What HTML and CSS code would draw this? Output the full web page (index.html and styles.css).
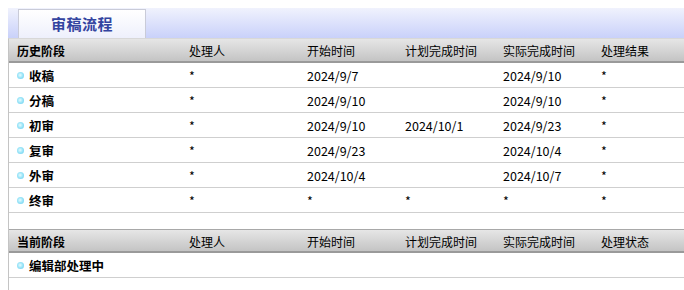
FILE: index.html
```html
<!DOCTYPE html>
<html>
<head>
<meta charset="utf-8">
<link rel="stylesheet" href="styles.css">
</head>
<body>
<div class="page">
  <div class="tabbar">
    <div class="tab">审稿流程</div>
  </div>
  <div class="table">
    <div class="row head">
      <div class="c first b">历史阶段</div>
      <div class="c">处理人</div>
      <div class="c">开始时间</div>
      <div class="c">计划完成时间</div>
      <div class="c">实际完成时间</div>
      <div class="c">处理结果</div>
    </div>
    <div class="row">
      <div class="c first b"><span class="dot"></span>收稿</div>
      <div class="c">*</div>
      <div class="c">2024/9/7</div>
      <div class="c"></div>
      <div class="c">2024/9/10</div>
      <div class="c">*</div>
    </div>
    <div class="row">
      <div class="c first b"><span class="dot"></span>分稿</div>
      <div class="c">*</div>
      <div class="c">2024/9/10</div>
      <div class="c"></div>
      <div class="c">2024/9/10</div>
      <div class="c">*</div>
    </div>
    <div class="row">
      <div class="c first b"><span class="dot"></span>初审</div>
      <div class="c">*</div>
      <div class="c">2024/9/10</div>
      <div class="c">2024/10/1</div>
      <div class="c">2024/9/23</div>
      <div class="c">*</div>
    </div>
    <div class="row">
      <div class="c first b"><span class="dot"></span>复审</div>
      <div class="c">*</div>
      <div class="c">2024/9/23</div>
      <div class="c"></div>
      <div class="c">2024/10/4</div>
      <div class="c">*</div>
    </div>
    <div class="row">
      <div class="c first b"><span class="dot"></span>外审</div>
      <div class="c">*</div>
      <div class="c">2024/10/4</div>
      <div class="c"></div>
      <div class="c">2024/10/7</div>
      <div class="c">*</div>
    </div>
    <div class="row">
      <div class="c first b"><span class="dot"></span>终审</div>
      <div class="c">*</div>
      <div class="c">*</div>
      <div class="c">*</div>
      <div class="c">*</div>
      <div class="c">*</div>
    </div>
    <div class="spacer"></div>
    <div class="row head">
      <div class="c first b">当前阶段</div>
      <div class="c">处理人</div>
      <div class="c">开始时间</div>
      <div class="c">计划完成时间</div>
      <div class="c">实际完成时间</div>
      <div class="c">处理状态</div>
    </div>
    <div class="row">
      <div class="c first b"><span class="dot"></span>编辑部处理中</div>
      <div class="c"></div>
      <div class="c"></div>
      <div class="c"></div>
      <div class="c"></div>
      <div class="c"></div>
    </div>
    <div class="tail"></div>
  </div>
</div>
</body>
</html>
```
FILE: styles.css
```css
html, body {
  margin: 0;
  padding: 0;
  background: #fff;
}
body {
  padding: 8px 0 0 8px;
  font-family: "Noto Sans CJK SC", "Noto Sans", sans-serif;
  font-size: 12px;
  color: #000;
  overflow: hidden;
}
.page {
  width: 676px;
}
.tabbar {
  height: 30px;
  background: linear-gradient(to bottom, #f0f2fd 0%, #c9d1fa 100%);
  display: flex;
  align-items: flex-end;
  padding-left: 10px;
}
.tab {
  width: 128px;
  height: 29px;
  box-sizing: border-box;
  border: 1px solid #c9cbd8;
  border-bottom: none;
  background: linear-gradient(to bottom, #ffffff 0%, #eef0fc 100%);
  color: #3344a0;
  font-weight: bold;
  font-size: 15px;
  display: flex;
  align-items: center;
  justify-content: center;
  letter-spacing: 0.5px;
  padding-bottom: 1px;
}
.table {
  border-left: 1px solid #c4c4c4;
  border-top: 1px solid #d8d8d8;
}
.row {
  display: grid;
  grid-template-columns: 172px 118px 98px 98px 98px 1fr;
  height: 25px;
  box-sizing: border-box;
  border-bottom: 1px solid #cfcfcf;
  align-items: center;
}
.row.head {
  height: 24px;
  padding-top: 2px;
  background: linear-gradient(to bottom, #e6e6e6 0%, #c4c4c4 100%);
  border-top: 1px solid #a8a8a8;
  border-bottom: 2px solid #9a9a9a;
}
.table > .row.head:first-child {
  border-top: none;
}
.c {
  padding-left: 8px;
  white-space: nowrap;
  display: flex;
  align-items: center;
  font-size: 12px;
  line-height: 16px;
}
.row:not(.head) .c {
  font-size: 12.5px;
  padding-top: 1px;
}
.c.first {
  padding-left: 8px;
}
.b {
  font-weight: bold;
}
.dot {
  width: 7px;
  height: 7px;
  border-radius: 50%;
  background: radial-gradient(circle at 45% 45%, #e8fbff 0%, #9fe6f8 45%, #5cc8ee 100%);
  margin-right: 5px;
  flex: none;
}
.spacer {
  height: 16px;
}
.tail {
  height: 13px;
}
```
